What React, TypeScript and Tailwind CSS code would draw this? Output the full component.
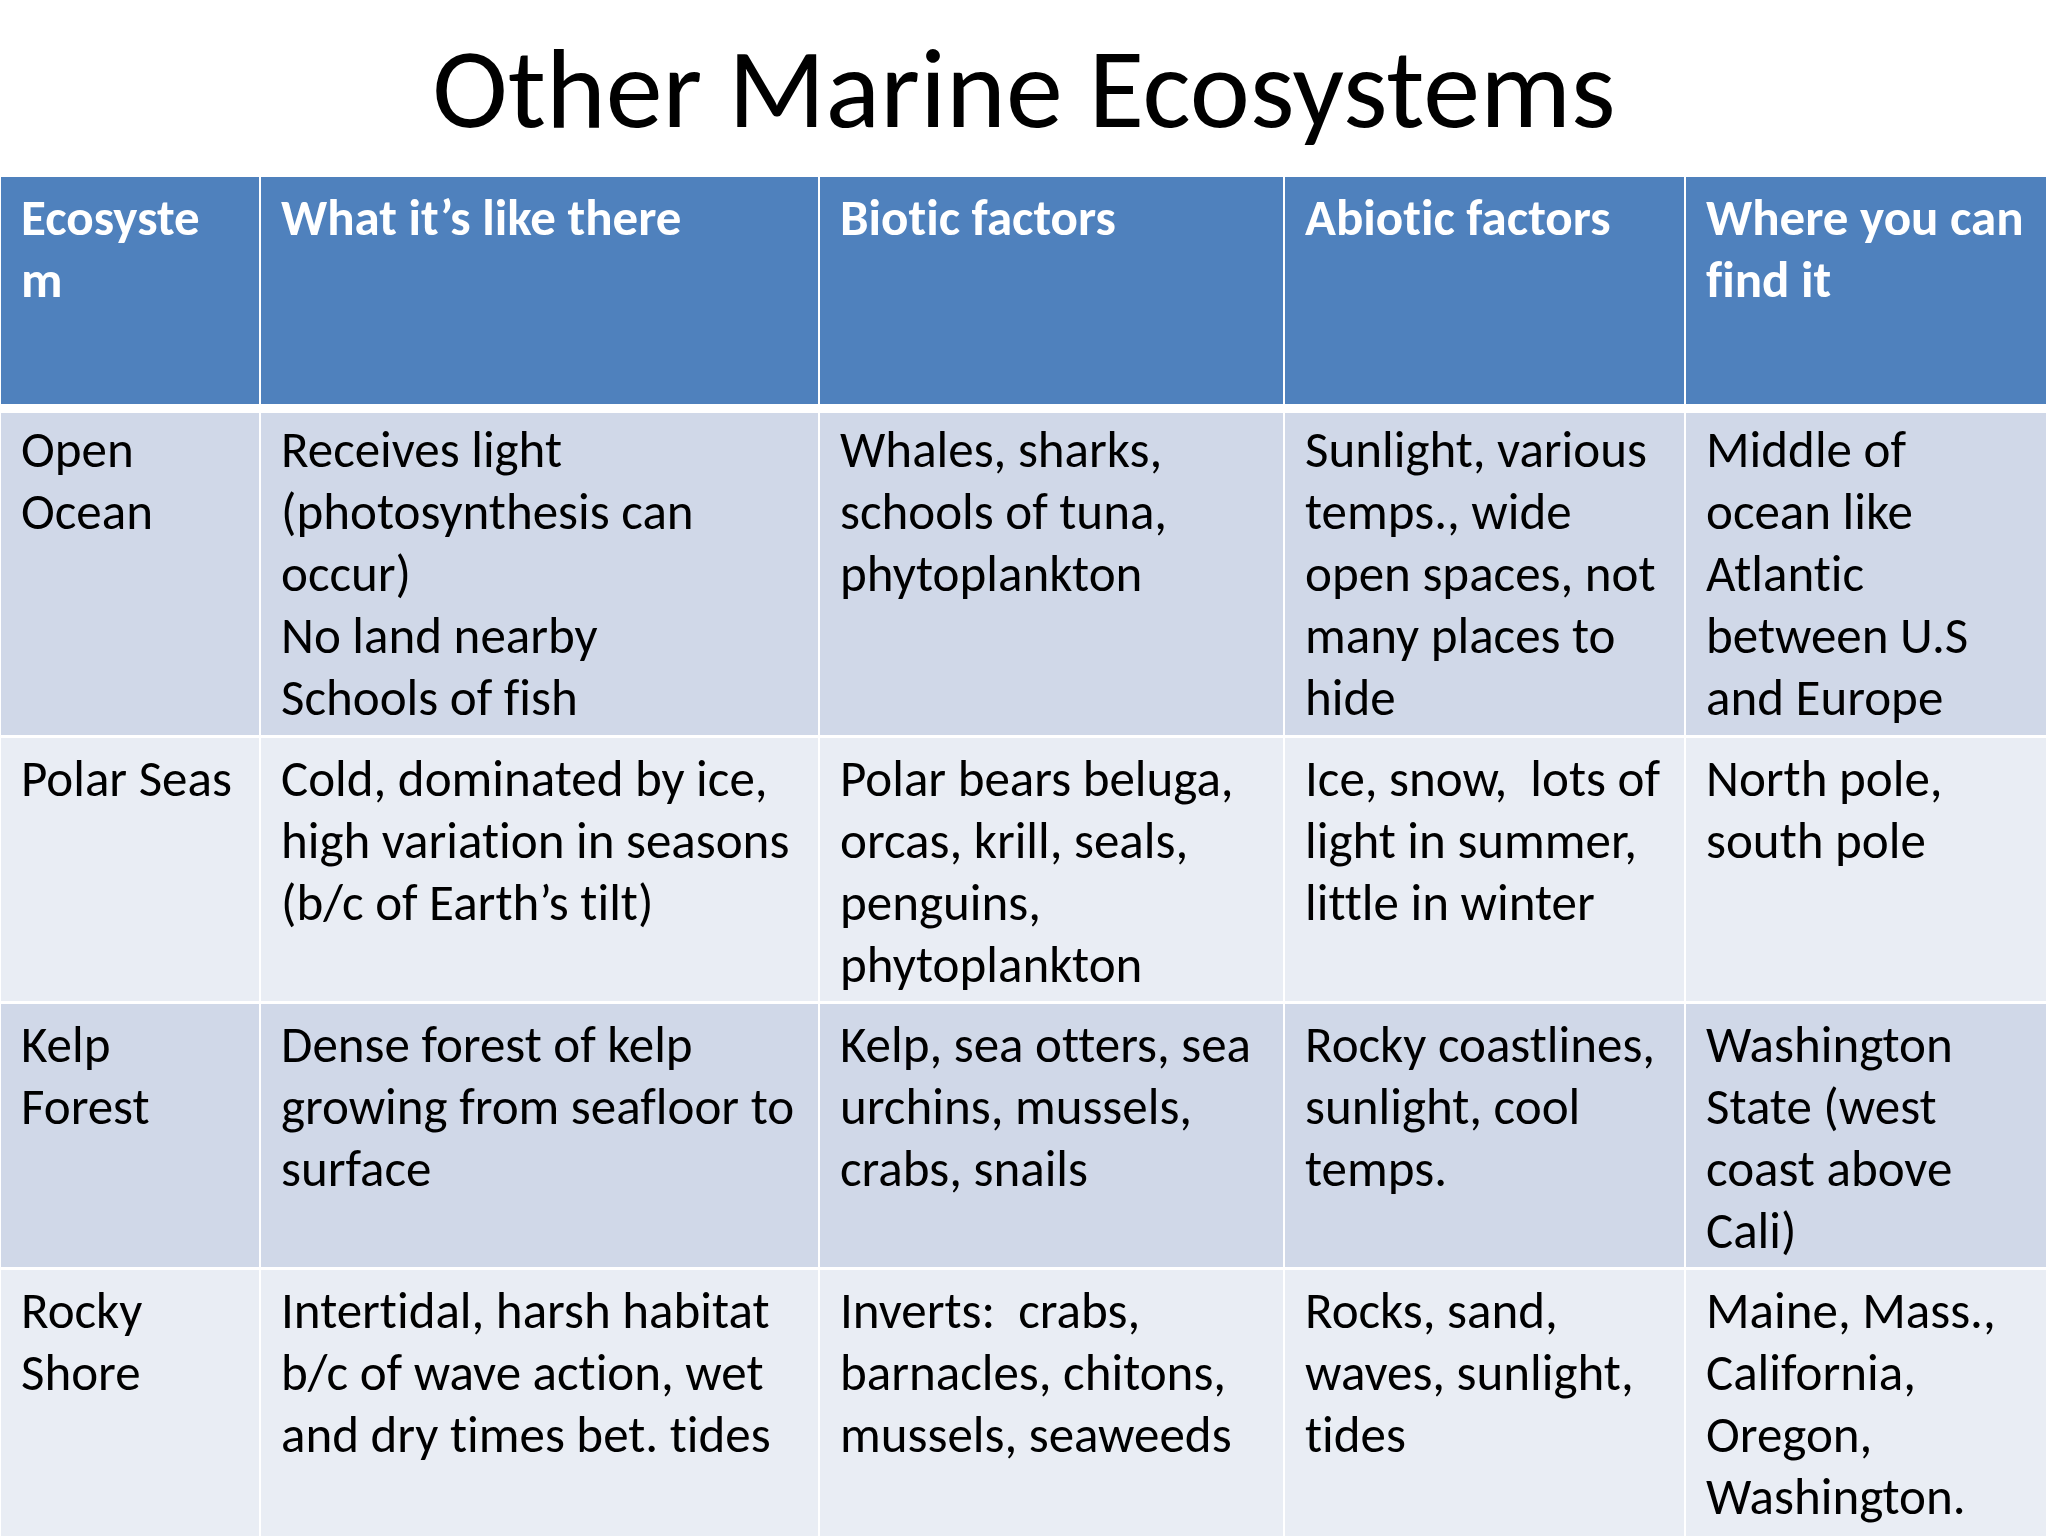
import React from "react";

const header = [
  ["Ecosyste", "m"],
  ["What it’s like there"],
  ["Biotic factors"],
  ["Abiotic factors"],
  ["Where you can", "find it"],
];

const rows: string[][][] = [
  [
    ["Open", "Ocean"],
    ["Receives light", "(photosynthesis can", "occur)", "No land nearby", "Schools of fish"],
    ["Whales, sharks,", "schools of tuna,", "phytoplankton"],
    ["Sunlight, various", "temps., wide", "open spaces, not", "many places to", "hide"],
    ["Middle of", "ocean like", "Atlantic", "between U.S", "and Europe"],
  ],
  [
    ["Polar Seas"],
    ["Cold, dominated by ice,", "high variation in seasons", "(b/c of Earth’s tilt)"],
    ["Polar bears beluga,", "orcas, krill, seals,", "penguins,", "phytoplankton"],
    ["Ice, snow,  lots of", "light in summer,", "little in winter"],
    ["North pole,", "south pole"],
  ],
  [
    ["Kelp", "Forest"],
    ["Dense forest of kelp", "growing from seafloor to", "surface"],
    ["Kelp, sea otters, sea", "urchins, mussels,", "crabs, snails"],
    ["Rocky coastlines,", "sunlight, cool", "temps."],
    ["Washington", "State (west", "coast above", "Cali)"],
  ],
  [
    ["Rocky", "Shore"],
    ["Intertidal, harsh habitat", "b/c of wave action, wet", "and dry times bet. tides"],
    ["Inverts:  crabs,", "barnacles, chitons,", "mussels, seaweeds"],
    ["Rocks, sand,", "waves, sunlight,", "tides"],
    ["Maine, Mass.,", "California,", "Oregon,", "Washington."],
  ],
];

const rowCls = [
  "h-[322px] bg-[#d0d8e8] pt-[6px]",
  "h-[263px] bg-[#e9edf4] pt-[10px]",
  "h-[263px] bg-[#d0d8e8] pt-[10px]",
  "h-[266px] bg-[#e9edf4] pt-[10px]",
];

function Lines({ lines }: { lines: string[] }) {
  return (
    <>
      {lines.map((l, i) => (
        <div key={i} className="whitespace-pre">
          {l}
        </div>
      ))}
    </>
  );
}

export default function App() {
  return (
    <div
      className="w-[2048px] h-[1536px] overflow-hidden bg-white text-black [font-variant-ligatures:none]"
      style={{ fontFamily: "Carlito, Calibri, Lato, sans-serif" }}
    >
      <div className="h-[177px] flex items-start justify-center">
        <h1 className="text-[114px] leading-[1] mt-[31px] font-normal">Other Marine Ecosystems</h1>
      </div>
      <div className="pl-[1px] pr-[2px]">
        <div className="grid grid-cols-[258px_557px_463px_399px_360px] gap-x-[2px]">
          {header.map((h, i) => (
            <div
              key={i}
              className="h-[227px] bg-[#4f81bd] text-white font-bold text-[51px] leading-[62px] px-[20px] pt-[10px]"
            >
              <Lines lines={h} />
            </div>
          ))}
        </div>
        <div className="h-[9px]" />
        <div className="flex flex-col gap-y-[3px]">
          {rows.map((r, ri) => (
            <div key={ri} className="grid grid-cols-[258px_557px_463px_399px_360px] gap-x-[2px]">
              {r.map((c, ci) => (
                <div
                  key={ci}
                  className={`${rowCls[ri]} text-[51px] leading-[62px] px-[20px]`}
                >
                  <Lines lines={c} />
                </div>
              ))}
            </div>
          ))}
        </div>
      </div>
    </div>
  );
}
